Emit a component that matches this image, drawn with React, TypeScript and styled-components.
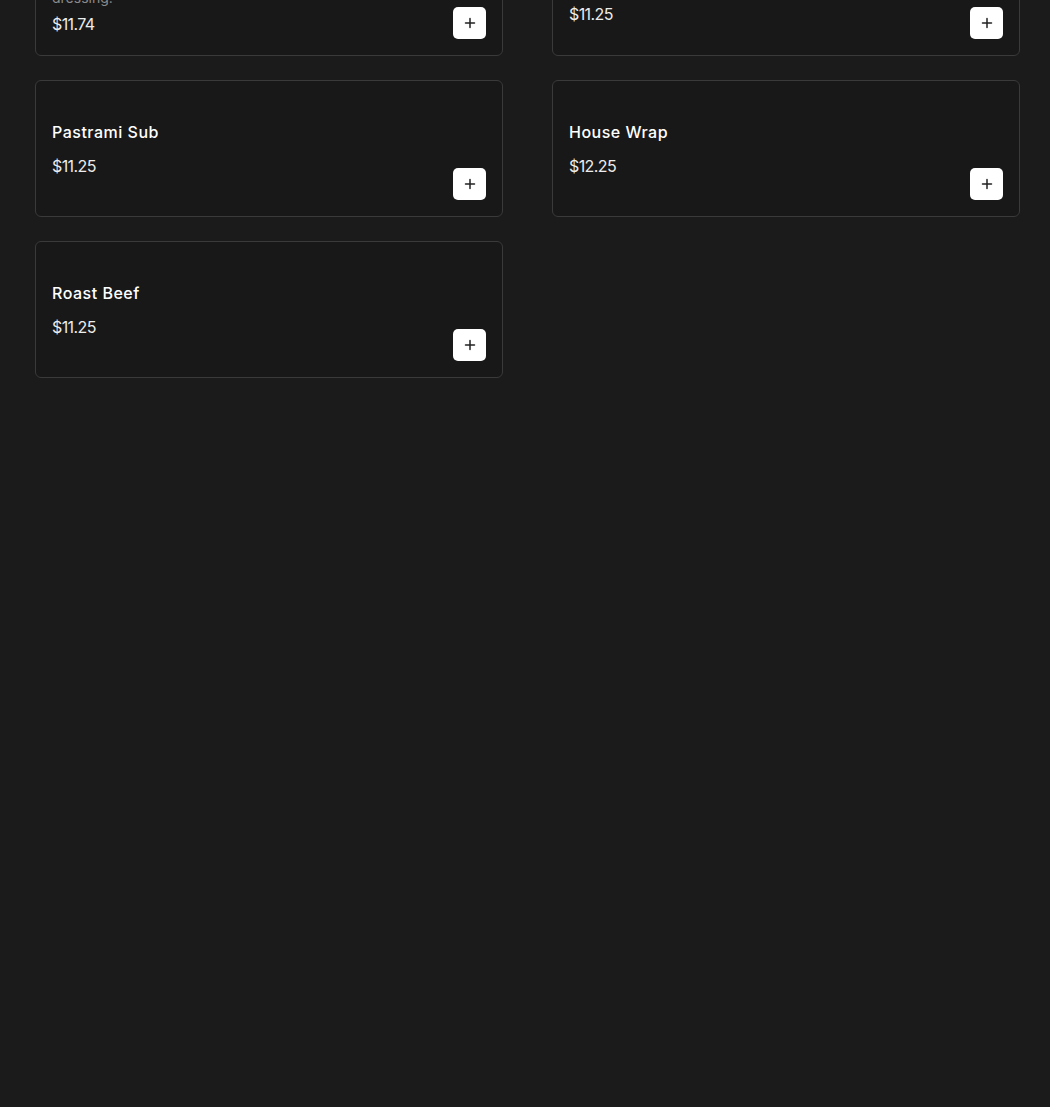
import React from "react";
import styled, { createGlobalStyle } from "styled-components";

const Global = createGlobalStyle`
  html, body {
    margin: 0;
    padding: 0;
    background: #1b1b1b;
    font-family: Inter, "Noto Sans", "Liberation Sans", sans-serif;
    color: #ffffff;
  }
  * { box-sizing: border-box; }
`;

const Page = styled.div`
  min-height: 1107px;
  background: #1b1b1b;
  overflow: hidden;
`;

const Grid = styled.div`
  display: grid;
  grid-template-columns: 468px 468px;
  column-gap: 49px;
  row-gap: 24px;
  padding: 0 30px 0 35px;
  margin-top: -81px;
`;

const Card = styled.div`
  display: grid;
  grid-template-columns: 1fr auto;
  column-gap: 16px;
  min-height: 137px;
  padding: 16px;
  background: #181818;
  border: 1px solid #3a3a3a;
  border-radius: 6px;
`;

const Info = styled.div`
  align-self: center;
  display: flex;
  flex-direction: column;
`;

const Title = styled.div`
  font-size: 16px;
  line-height: 24px;
  font-weight: 500;
  color: #ffffff;
  letter-spacing: 0.5px;
`;

const Desc = styled.div`
  margin-top: 4px;
  font-size: 14px;
  line-height: 20px;
  color: #8a8a8a;
  white-space: pre-line;
`;

const Price = styled.div<{ $gap: number }>`
  margin-top: ${(p) => p.$gap}px;
  font-size: 16px;
  line-height: 24px;
  font-weight: 400;
  color: #ececec;
  letter-spacing: -0.6px;
`;

const AddButton = styled.button`
  align-self: end;
  width: 33px;
  height: 32px;
  padding: 0;
  display: flex;
  align-items: center;
  justify-content: center;
  background: #ffffff;
  border: none;
  border-radius: 5px;
  cursor: pointer;
`;

type Item = { name: string; desc?: string; price: string };

const items: Item[] = [
  {
    name: "Italian Sub",
    desc: "Ham, salami, provolone, lettuce, tomato and Italian\ndressing.",
    price: "$11.74",
  },
  {
    name: "Turkey Club",
    desc: "Turkey, bacon, lettuce and tomato.",
    price: "$11.25",
  },
  { name: "Pastrami Sub", price: "$11.25" },
  { name: "House Wrap", price: "$12.25" },
  { name: "Roast Beef", price: "$11.25" },
];

const PlusIcon = () => (
  <svg width="12" height="12" viewBox="0 0 12 12" fill="none">
    <path d="M6 1.5v9M1.5 6h9" stroke="#222" strokeWidth="1.5" strokeLinecap="round" />
  </svg>
);

export default function App() {
  return (
    <Page>
      <Global />
      <Grid>
        {items.map((it) => (
          <Card key={it.name}>
            <Info>
              <Title>{it.name}</Title>
              {it.desc && <Desc>{it.desc}</Desc>}
              <Price $gap={it.desc ? 4 : 10}>{it.price}</Price>
            </Info>
            <AddButton aria-label={`Add ${it.name}`}>
              <PlusIcon />
            </AddButton>
          </Card>
        ))}
      </Grid>
    </Page>
  );
}
